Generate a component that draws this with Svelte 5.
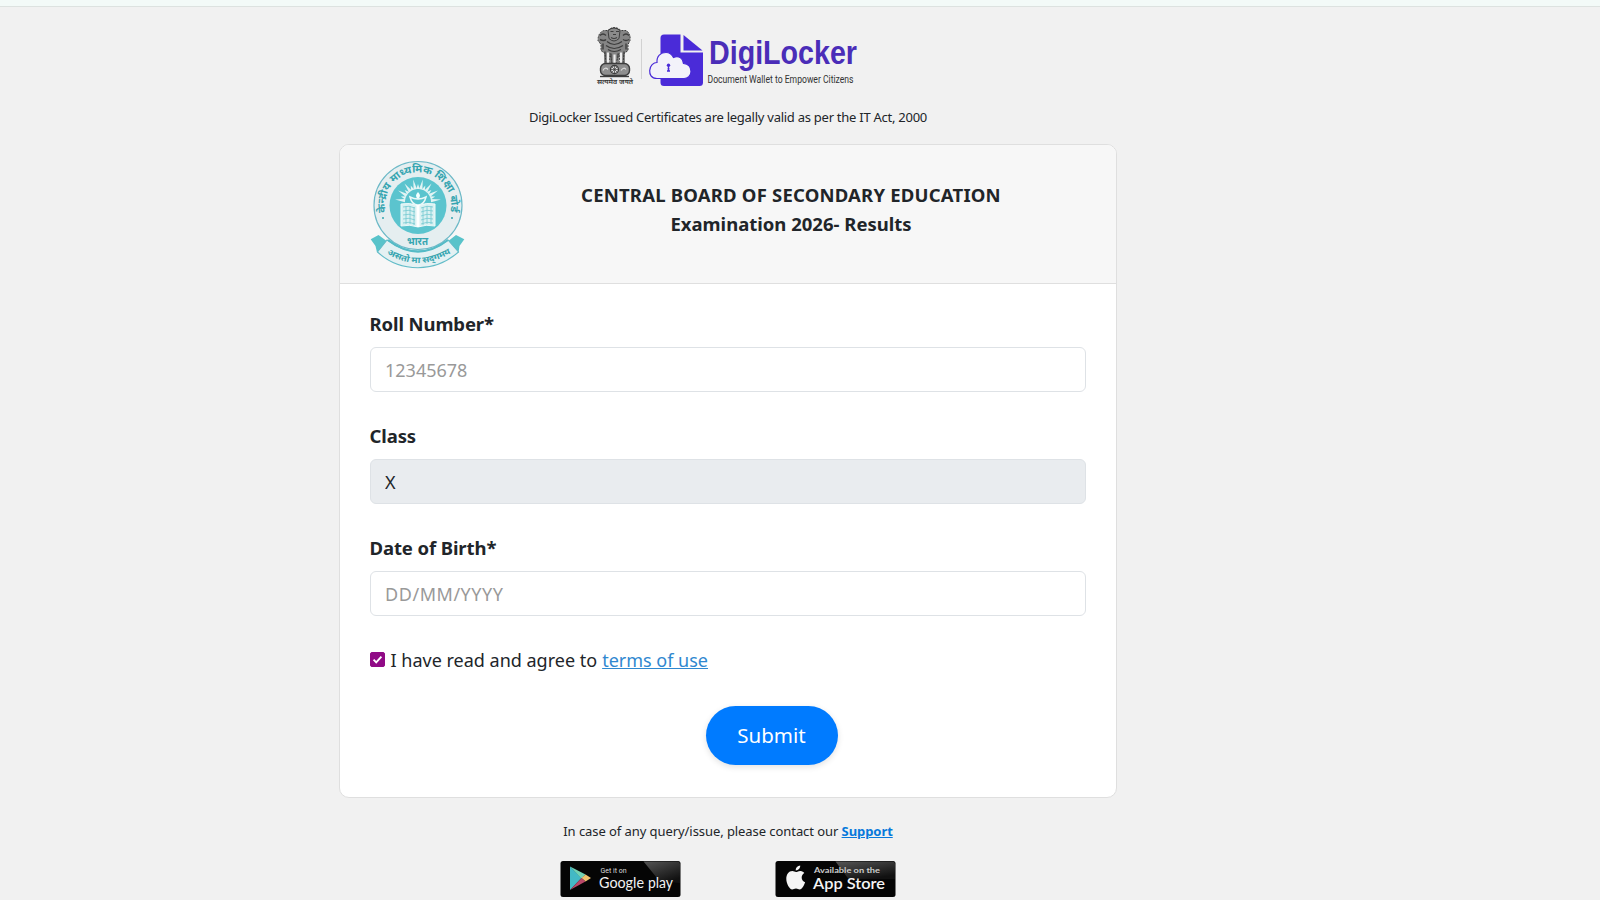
<div class="page">
    <div class="topbar"></div>

    <main>
        <svg class="brand" viewBox="0 0 300 90" role="img" aria-label="DigiLocker">
            <!-- state emblem -->
            <g fill="#3d3d3d" stroke="#3d3d3d" transform="translate(0 .5)">
                <path d="M28 20 Q34 14 41 20 L46 20 Q51 23 50 30 L48 34 L48 40 L44 43 L43 53 L40 53 L39 43 L36 53 L32 53 L30 43 L29 53 L26 53 L25 43 L21 40 L21 34 L18 30 Q18 22 24 20 Z" fill="#858585" stroke-width="1" stroke-dasharray="2 1" />
                <path d="M28 20 Q34 15 40 20 L39 28 Q34 33 29 28 Z" fill="#8a8a8a" stroke-width="1" />
                <path d="M30.500 21 h3 M36 21 h3 M33 24 h3 M31 27 q3 2 6 0 M27 31 q7 6 15 0 M26 35 q8 6 17 0 M28 39 q6 4 13 0" fill="none" stroke-width="1.200" />
                <path d="M20 25 q3 -3 6 0 M20 29 q4 2 6 0 M43 25 q3 -3 6 0 M43 29 q3 2 6 0 M23 33 v6 M46 33 v6" fill="none" stroke-width="1.400" />
                <path d="M28 42 v11 M34.500 44 v9 M41 42 v11" fill="none" stroke="#ededed" stroke-width="2.200" />
                <path d="M25 41 v12 M31 43 v10 M38 43 v10 M44 41 v12" fill="none" stroke-width="1.200" />
                <rect x="20.500" y="53" width="29" height="12" rx="5" fill="#8f8f8f" stroke-width="1.400" />
                <circle cx="34.500" cy="59" r="4" fill="#ddd" stroke-width="1.300" />
                <path d="M30.500 59 h8 M34.500 55 v8 M31.800 56.300 l5.400 5.400 M37.200 56.300 l-5.400 5.400" fill="none" stroke-width=".7" />
                <path d="M23 60 q2 -4 5 -1 M41 60 q3 -4 5 -1" fill="none" stroke="#ddd" stroke-width="1.200" />
                <path d="M20 66 h29" stroke-width="1.400" />
            </g>
            <text x="17" y="73.500" class="hindi" font-size="7" font-weight="600" textLength="36" lengthAdjust="spacingAndGlyphs" fill="#333">सत्यमेव जयते</text>
            <path d="M61.500 29 v40" stroke="#d2d2d2" />

            <!-- document with a cloud over it -->
            <path d="M84 24.500 H100.500 V42.500 H123 V72.500 Q123 76 119.500 76 H84 Q80.500 76 80.500 72.500 V28 Q80.500 24.500 84 24.500 Z" fill="#4a2bd8" />
            <path d="M103.500 25 L122.500 40.500 H103.500 Z" fill="#4a2bd8" />
            <path d="M77 68.500 C71 68.500 69.500 64 69.700 60.500 C70 55.500 73.500 52.500 77 52.500 C76.500 46 80.500 42.500 86 42.500 C90 42.500 92 44.500 93.500 47.500 C99 45 103.500 49 103.500 53.500 C108 54 111 57 111 61.500 C111 66 107.500 68.500 104 68.500 Z" fill="#f3f2fa" stroke="#4a2bd8" stroke-width="1.200" />
            <path d="M88.500 55 v4" stroke="#4a2bd8" stroke-width="1.300" />
            <circle cx="88.500" cy="55.300" r="1.700" fill="#4a2bd8" />
            <path d="M87 61 h3 M88.500 58 v3" stroke="#4a2bd8" stroke-width="1.600" />

            <text x="129" y="54" class="wordmark" font-size="33" font-weight="700" textLength="148" lengthAdjust="spacingAndGlyphs" fill="#4a2db8">DigiLocker</text>
            <text x="127.500" y="73" class="subline" font-size="10" textLength="146" lengthAdjust="spacingAndGlyphs" fill="#333">Document Wallet to Empower Citizens</text>
        </svg>

        <p class="tagline">DigiLocker Issued Certificates are legally valid as per the IT Act, 2000</p>

        <form class="card" onsubmit={(e) => e.preventDefault()}>
            <header>
                <svg class="seal" viewBox="10 5 96 110" role="img" aria-label="CBSE">
                    <path d="M10.700 84.300 L18.500 80 L28 87 L17 97.500 L15.500 91 Z M104.300 84.300 L96 80 L87 87 L98.500 97.500 L99.500 91 Z" fill="#59c3ca" />
                    <circle cx="58" cy="50.500" r="44" fill="#e5eef0" stroke="#6db9c7" stroke-width="1.200" />
                    <circle cx="58" cy="50.500" r="28.500" fill="#5bc4ce" />
                    <g fill="#e2f4f4">
                        {#each rays as ray}
                            <path d="M56.300 34 L58 {45 - ray.length} L59.700 34 Z" transform="rotate({ray.angle} 58 47)" />
                        {/each}
                    </g>
                    <path d="M50 42 Q58 46 66 42 Q64 50 58 50 Q52 50 50 42 Z" fill="#5bc4ce" stroke="#eaf8f8" stroke-width="1.500" />
                    <path d="M58 44 Q54 41 58 37 Q62 41 58 44" fill="#f4ffff" />
                    <path d="M41 49 Q50 47 58 51 Q66 47 75 49 V71 Q66 69 58 72 Q50 69 41 71 Z" fill="#d9f1f2" stroke="#eefafa" />
                    <path d="M43 52 q6 -2 12 1 M43 56 q6 -2 12 1 M43 60 q6 -2 12 1 M43 64 q6 -2 12 1 M43 68 q6 -2 12 1 M61 53 q6 -3 12 -1 M61 57 q6 -3 12 -1 M61 61 q6 -3 12 -1 M61 65 q6 -3 12 -1 M61 69 q6 -3 12 -1 M46 51 v18 M50 51 v18 M54 52 v18 M63 52 v18 M67 51 v18 M71 51 v18" fill="none" stroke="#73c9d0" stroke-width=".8" />
                    <path d="M58 50 v22" stroke="#fff" stroke-width="3" />

                    <path id="seal-top" d="M26 58.500 A33 33 0 1 1 90 58.500" fill="none" />
                    <text class="hindi" font-size="10.500" font-weight="700" fill="#36a5b0">
                        <textPath href="#seal-top" startOffset="1" textLength="117" lengthAdjust="spacingAndGlyphs">केन्द्रीय माध्यमिक शिक्षा बोर्ड</textPath>
                    </text>
                    <circle cx="23" cy="63" r="1" fill="#36a5b0" />
                    <circle cx="92" cy="63" r="1" fill="#36a5b0" />
                    <text x="47" y="90" class="hindi" font-size="10.500" font-weight="700" fill="#36a5b0" textLength="21" lengthAdjust="spacingAndGlyphs">भारत</text>

                    <path d="M27 85 Q58 108 88 85 L98.500 97 Q81 112.500 58 112.800 Q34 112.500 17.500 97 Z" fill="#e4f1f3" stroke="#62bcc8" stroke-width="1.100" />
                    <path d="M28 85 Q58 108 88 85" fill="none" stroke="#55bbc6" stroke-width="2.200" />
                    <path id="seal-bottom" d="M26 98 Q58 118 91 98" fill="none" />
                    <text class="hindi" font-size="8.500" font-weight="700" fill="#36a5b0">
                        <textPath href="#seal-bottom" startOffset="1" textLength="68" lengthAdjust="spacingAndGlyphs">असतो मा सद्‌गमय</textPath>
                    </text>
                </svg>
                <h1>
                    <span class="board">CENTRAL BOARD OF SECONDARY EDUCATION</span>
                    <span>Examination 2026- Results</span>
                </h1>
            </header>

            <div class="body">
                <div class="field">
                    <label for="roll">Roll Number*</label>
                    <input id="roll" type="text" placeholder="12345678" bind:value={roll}>
                </div>
                <div class="field">
                    <label for="class">Class</label>
                    <input id="class" type="text" value="X" readonly>
                </div>
                <div class="field">
                    <label for="dob">Date of Birth*</label>
                    <input id="dob" class="date" type="text" placeholder="DD/MM/YYYY" bind:value={dob}>
                </div>

                <div class="terms">
                    <label class="check" class:checked={agreed}>
                        <input type="checkbox" aria-label="Agree" bind:checked={agreed}>
                        <svg viewBox="0 0 15 15"><path d="M3 7.700 L6 10.800 L12 4.200" /></svg>
                    </label>
                    <span class="agree">I have read and agree to</span>
                    <a href="#terms">terms of use</a>
                </div>

                <button type="submit">Submit</button>
            </div>
        </form>

        <p class="support">In case of any query/issue, please contact our <a href="#support">Support</a></p>

        <div class="stores">
            <svg viewBox="0 0 120 36" role="img" aria-label="Google play">
                <rect width="120" height="36" rx="2.500" fill="#050505" />
                <path d="M83 .5 H117.500 Q119.500 .5 119.500 3 V22 L99 20 Z" fill="url(#shine)" />
                <path d="M9.500 5.500 V29 L21 17 Z" fill="#43b9c5" />
                <path d="M9.500 5.500 L25 13.500 L21 17.500 Z" fill="#71d2b4" />
                <path d="M25 13.500 L30.500 17 L25 20.500 L21 17 Z" fill="#efc16d" />
                <path d="M9.500 29 L21 17 L25 20.500 Z" fill="#b84868" />
                <text x="40" y="12" font-family="Roboto, sans-serif" font-size="6.500" fill="#ddd" textLength="26" lengthAdjust="spacingAndGlyphs">Get it on</text>
                <text x="38.500" y="26.500" font-family="Lato, sans-serif" font-size="15.500" fill="#f2f2f2" textLength="45" lengthAdjust="spacingAndGlyphs">Google</text>
                <text x="87.500" y="26.500" font-family="Lato, sans-serif" font-size="15.500" fill="#f2f2f2" textLength="25" lengthAdjust="spacingAndGlyphs">play</text>
                <defs>
                    <linearGradient id="shine" x1="0" y1="0" x2=".6" y2="1">
                        <stop stop-color="#555" />
                        <stop offset="1" stop-color="#111" />
                    </linearGradient>
                </defs>
            </svg>
            <svg viewBox="0 0 120 36" role="img" aria-label="App Store">
                <rect width="120" height="36" rx="2.500" fill="#050505" />
                <path d="M60 .5 H117.500 Q119.500 .5 119.500 3 V18 L73 18 Z" fill="url(#shine)" />
                <path d="M20.500 11 C22 11 23 9.700 25 9.900 C26.800 10 28 10.900 28.800 12 C25 14.500 25.500 19.500 29.600 21.300 C28.500 24.500 26.500 28.500 24.300 28.500 C22.800 28.500 22.200 27.600 20.500 27.600 C18.700 27.600 18 28.500 16.700 28.500 C14 28.500 10.800 22.500 10.800 18 C10.800 13 13.500 10 16.700 10 C18.400 10 19.500 11 20.500 11 Z M20.300 9.500 C20 7 22.300 4.800 24.700 4.600 C25 7.200 22.700 9.500 20.300 9.500 Z" fill="#f5f5f5" />
                <text x="38.500" y="12" font-family="Lato, sans-serif" font-size="8" font-weight="700" fill="#ccc" textLength="66" lengthAdjust="spacingAndGlyphs">Available on the</text>
                <text x="37.500" y="28" font-family="Lato, sans-serif" font-size="16" font-weight="600" fill="#f5f5f5" textLength="72" lengthAdjust="spacingAndGlyphs">App Store</text>
            </svg>
        </div>
    </main>
</div>

<script lang="ts">
    let roll = $state("");
    let dob = $state("");
    let agreed = $state(true);

    // light rays fanning out behind the lamp
    const rays = Array.from({ length: 15 }, (_, i) => ({
        angle: -84 + i * 12,
        length: i % 2 ? 16 : 21,
    }));
</script>

<style>
    :global(body) {
        margin: 0;
        background: #f1f1f1;
        overflow: hidden;
    }

    .page {
        height: 900px;
        overflow: hidden;
        background: #f1f1f1;
        color: #212529;
        font-family: "Noto Sans", "Open Sans", sans-serif;
    }

    .topbar {
        height: 6px;
        background: #f3faf8;
        border-bottom: 1px solid #dde2e0;
    }

    main {
        width: 778px;
        margin-left: 339px;
        display: flex;
        flex-direction: column;
        align-items: center;
    }

    .brand {
        width: 300px;
        height: 90px;
        margin: 3px 0 0 4px;
        flex: none;
    }

    .wordmark {
        font-family: "Liberation Sans Narrow", "Liberation Sans", sans-serif;
    }

    .subline {
        font-family: Roboto, sans-serif;
    }

    .hindi {
        font-family: "Noto Sans Devanagari", "Noto Sans", sans-serif;
    }

    .tagline, .support {
        margin: 0;
        font-size: 13px;
        line-height: 20px;
        white-space: nowrap;
    }

    .tagline {
        margin-top: 7px;
        letter-spacing: -0.26px;
    }

    .card {
        box-sizing: border-box;
        width: 778px;
        height: 654px;
        margin-top: 17px;
        border: 1px solid #dfdfdf;
        border-radius: 10px;
        background: #fff;
        overflow: hidden;
        flex: none;
    }

    header {
        box-sizing: border-box;
        height: 139px;
        padding: 15px 29px 0 30px;
        display: flex;
        align-items: flex-start;
        background: #f7f7f7;
        border-bottom: 1px solid #dfdfdf;
    }

    .seal {
        width: 96px;
        height: 110px;
        flex: none;
    }

    h1 {
        flex: 1;
        margin: 20px 0 0 29px;
        display: flex;
        flex-direction: column;
        align-items: center;
        font-size: 18.5px;
        line-height: 29px;
        font-weight: 700;
        white-space: nowrap;
    }

    .board {
        letter-spacing: 0.2px;
    }

    .body {
        padding: 25px 30px 0 29.5px;
        display: flex;
        flex-direction: column;
    }

    .field {
        height: 112px;
    }

    .field label {
        display: block;
        height: 38px;
        line-height: 29px;
        font-size: 18.5px;
        font-weight: 700;
        letter-spacing: -0.1px;
    }

    .field input {
        box-sizing: border-box;
        display: block;
        width: 716.5px;
        height: 45px;
        padding: 0 14.5px;
        border: 1px solid #dee2e6;
        border-radius: 6px;
        background: #fff;
        color: #212529;
        font: 18px "Noto Sans", sans-serif;
    }

    .field .date {
        letter-spacing: 0.55px;
    }

    .field input[readonly] {
        background: #e9ecef;
    }

    .field input::placeholder {
        color: #999;
        opacity: 1;
    }

    .terms {
        height: 30px;
        display: flex;
        align-items: center;
        font-size: 18px;
    }

    .check {
        width: 15px;
        height: 15px;
        margin-bottom: 2px;
        border-radius: 2px;
        border: 1px solid #777;
        box-sizing: border-box;
        display: grid;
    }

    .check.checked {
        background: #900a86;
        border-color: #900a86;
    }

    .check input, .check svg {
        grid-area: 1 / 1;
        width: 13px;
        height: 13px;
        margin: 0;
    }

    .check input {
        opacity: 0;
    }

    .check path {
        fill: none;
        stroke: #fff;
        stroke-width: 2.2;
    }

    .agree {
        margin: 0 5px 0 6px;
    }

    .terms a {
        color: #2f88d0;
    }

    button {
        width: 132px;
        height: 59px;
        margin: 31px 0 0 336px;
        padding: 0 0 2px;
        border: 0;
        border-radius: 30px;
        background: #007bff;
        box-shadow: 0 2px 6px rgb(0 0 0 / 0.12);
        color: #fff;
        font: 20.5px "Noto Sans", sans-serif;
    }

    .support {
        margin-top: 23px;
        letter-spacing: -0.07px;
    }

    .support a {
        color: #0879db;
        font-weight: 700;
    }

    .stores {
        width: 336px;
        margin-top: 20px;
        display: flex;
        justify-content: space-between;
    }

    .stores svg {
        width: 121px;
        height: 36px;
        flex: none;
    }
</style>
